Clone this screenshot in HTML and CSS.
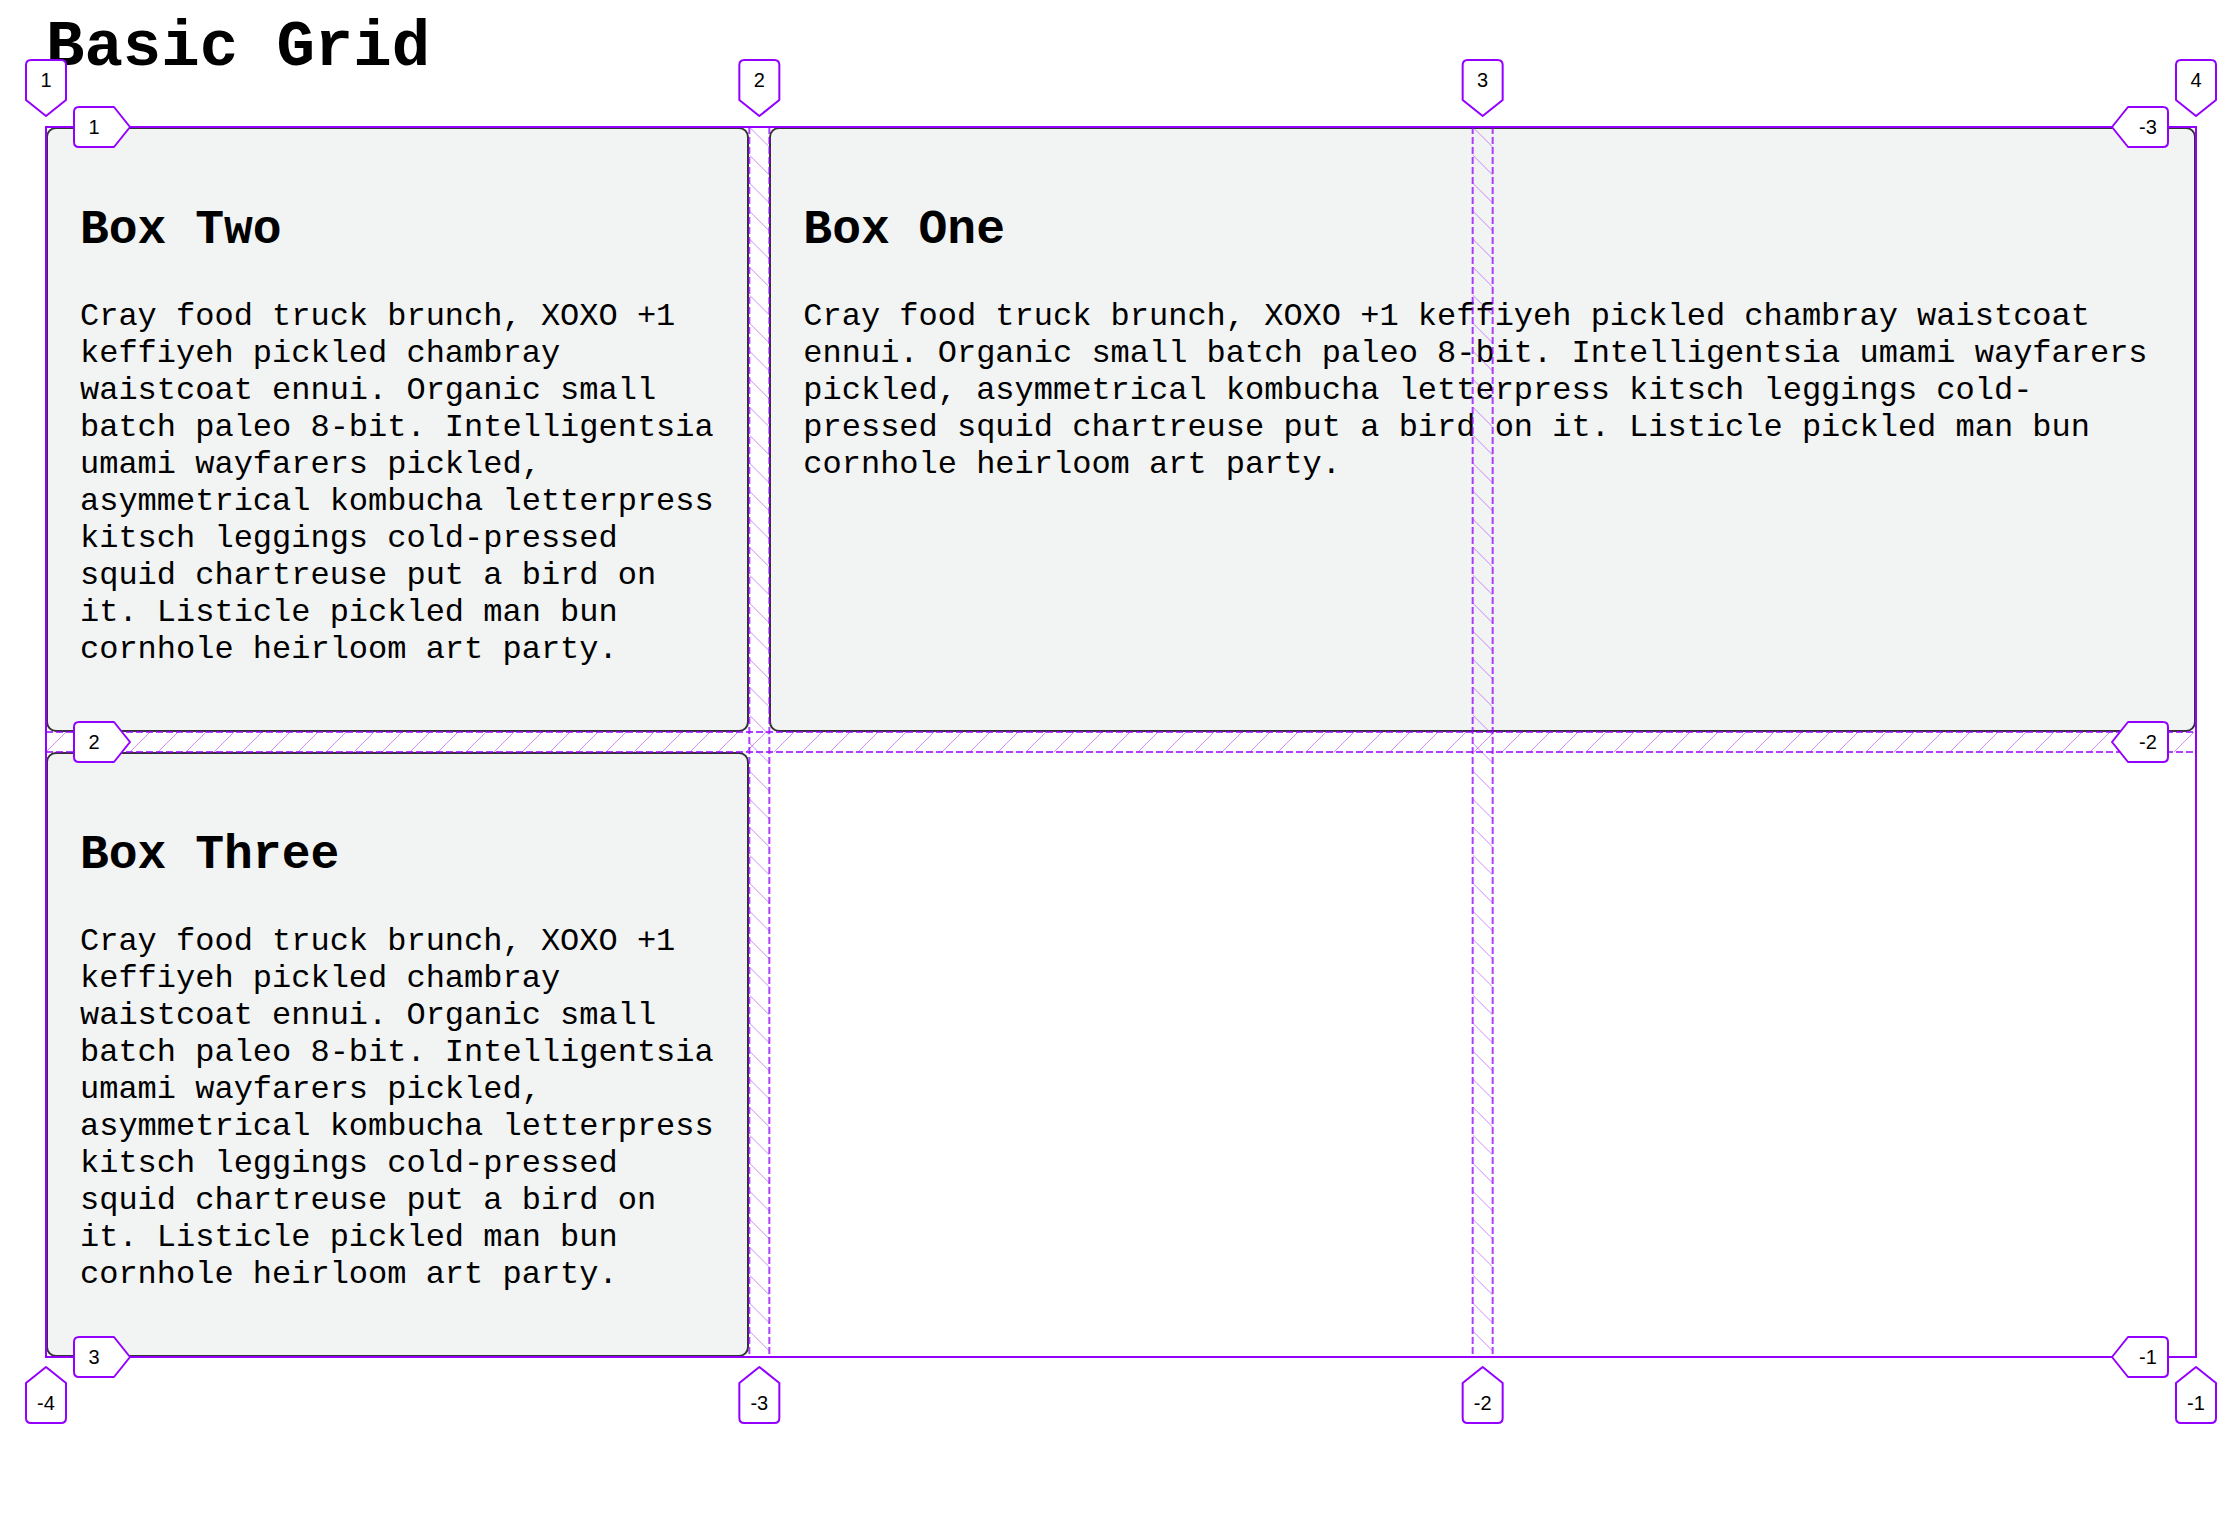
FILE: index.html
```html
<!DOCTYPE html>
<html>
<head>
    <title>Basic Grid</title>
    <link rel="stylesheet" href="styles.css">
</head>
<body>
    <h1 class="title">Basic Grid</h1>

    <div class="grid">
        <div class="box box-one">
            <h2>Box One</h2>
            <p>Cray food truck brunch, XOXO +1 keffiyeh pickled chambray waistcoat ennui. Organic small batch paleo 8-bit. Intelligentsia umami wayfarers pickled, asymmetrical kombucha letterpress kitsch leggings cold-pressed squid chartreuse put a bird on it. Listicle pickled man bun cornhole heirloom art party.</p>
        </div>
        <div class="box box-two">
            <h2>Box Two</h2>
            <p>Cray food truck brunch, XOXO +1 keffiyeh pickled chambray waistcoat ennui. Organic small batch paleo 8-bit. Intelligentsia umami wayfarers pickled, asymmetrical kombucha letterpress kitsch leggings cold-pressed squid chartreuse put a bird on it. Listicle pickled man bun cornhole heirloom art party.</p>
        </div>
        <div class="box box-three">
            <h2>Box Three</h2>
            <p>Cray food truck brunch, XOXO +1 keffiyeh pickled chambray waistcoat ennui. Organic small batch paleo 8-bit. Intelligentsia umami wayfarers pickled, asymmetrical kombucha letterpress kitsch leggings cold-pressed squid chartreuse put a bird on it. Listicle pickled man bun cornhole heirloom art party.</p>
        </div>
    </div>

    <!-- grid inspector overlay -->
    <svg class="inspector" width="2240" height="1518" viewBox="0 0 2240 1518">
        <defs>
            <pattern id="hatch-c1" patternUnits="userSpaceOnUse" x="749.33" y="127" width="20" height="28">
                <line x1="0" y1="0" x2="20" y2="20" />
            </pattern>
            <pattern id="hatch-c2" patternUnits="userSpaceOnUse" x="1472.67" y="127" width="20" height="28">
                <line x1="0" y1="0" x2="20" y2="20" />
            </pattern>
            <pattern id="hatch-r1" patternUnits="userSpaceOnUse" x="46" y="732" width="28" height="20">
                <line x1="0" y1="20" x2="20" y2="0" />
            </pattern>
            <path id="badge" d="M-20,20 L-20,-15 Q-20,-20 -15,-20 L15,-20 Q20,-20 20,-15 L20,20 L0,36 Z" />
        </defs>

        <!-- gaps -->
        <rect x="749.33" y="127" width="20" height="1230" fill="url(#hatch-c1)" />
        <rect x="1472.67" y="127" width="20" height="1230" fill="url(#hatch-c2)" />
        <rect x="46" y="732" width="2150" height="20" fill="url(#hatch-r1)" />

        <!-- inner lines -->
        <g class="dash">
            <line x1="749.33" y1="127" x2="749.33" y2="1357" />
            <line x1="769.33" y1="127" x2="769.33" y2="1357" />
            <line x1="1472.67" y1="127" x2="1472.67" y2="1357" />
            <line x1="1492.67" y1="127" x2="1492.67" y2="1357" />
            <line x1="46" y1="732" x2="2196" y2="732" />
            <line x1="46" y1="752" x2="2196" y2="752" />
        </g>

        <rect class="outline" x="46" y="127" width="2150" height="1230" />

        <!-- column numbers -->
        <g class="num" transform="translate(46,80)"><use href="#badge" /><text y="7">1</text></g>
        <g class="num" transform="translate(759.33,80)"><use href="#badge" /><text y="7">2</text></g>
        <g class="num" transform="translate(1482.67,80)"><use href="#badge" /><text y="7">3</text></g>
        <g class="num" transform="translate(2196,80)"><use href="#badge" /><text y="7">4</text></g>

        <g class="num" transform="translate(46,1403)"><use href="#badge" transform="rotate(180)" /><text y="7">-4</text></g>
        <g class="num" transform="translate(759.33,1403)"><use href="#badge" transform="rotate(180)" /><text y="7">-3</text></g>
        <g class="num" transform="translate(1482.67,1403)"><use href="#badge" transform="rotate(180)" /><text y="7">-2</text></g>
        <g class="num" transform="translate(2196,1403)"><use href="#badge" transform="rotate(180)" /><text y="7">-1</text></g>

        <!-- row numbers -->
        <g class="num" transform="translate(94,127)"><use href="#badge" transform="rotate(-90)" /><text y="7">1</text></g>
        <g class="num" transform="translate(94,742)"><use href="#badge" transform="rotate(-90)" /><text y="7">2</text></g>
        <g class="num" transform="translate(94,1357)"><use href="#badge" transform="rotate(-90)" /><text y="7">3</text></g>

        <g class="num" transform="translate(2148,127)"><use href="#badge" transform="rotate(90)" /><text y="7">-3</text></g>
        <g class="num" transform="translate(2148,742)"><use href="#badge" transform="rotate(90)" /><text y="7">-2</text></g>
        <g class="num" transform="translate(2148,1357)"><use href="#badge" transform="rotate(90)" /><text y="7">-1</text></g>
    </svg>
</body>
</html>
```

FILE: styles.css
```css
body {
    margin: 0;
    font-family: "Liberation Mono", "Courier New", monospace;
    color: #000;
    background: #fff;
}

.title {
    margin: 12px 0 0 46px;
    font-size: 64px;
    line-height: 72px;
    font-weight: bold;
}

.grid {
    display: grid;
    grid-template-columns: repeat(3, 1fr);
    grid-template-rows: 605px 605px;
    gap: 20px;
    width: 2150px;
    margin: 43px 0 0 46px;
}

.box {
    background: #f2f3f3;
    border: 2px solid #333;
    border-radius: 10px;
    padding: 0 32px;
}
.box h2 {
    margin: 74px 0 41px;
    font-size: 48px;
    font-weight: bold;
}
.box p {
    margin: 0;
    font-size: 32px;
    line-height: 37px;
}

.box-one { grid-column: 2 / 4; grid-row: 1; }
.box-two { grid-column: 1; grid-row: 1; }
.box-three { grid-column: 1; grid-row: 2; }

.inspector {
    position: absolute;
    top: 0;
    left: 0;
    pointer-events: none;
}
.inspector pattern line {
    stroke: rgba(148, 0, 255, 0.45);
    stroke-width: 1;
}
.dash line {
    stroke: rgba(148, 0, 255, 0.75);
    stroke-width: 2;
    stroke-dasharray: 7 3;
}
.outline {
    fill: none;
    stroke: #9400ff;
    stroke-width: 2;
}
.num use {
    fill: #fff;
    stroke: #9400ff;
    stroke-width: 2;
    stroke-linejoin: round;
}
.num text {
    font-family: "Liberation Sans", Arial, sans-serif;
    font-size: 20px;
    text-anchor: middle;
    fill: #000;
}
```
